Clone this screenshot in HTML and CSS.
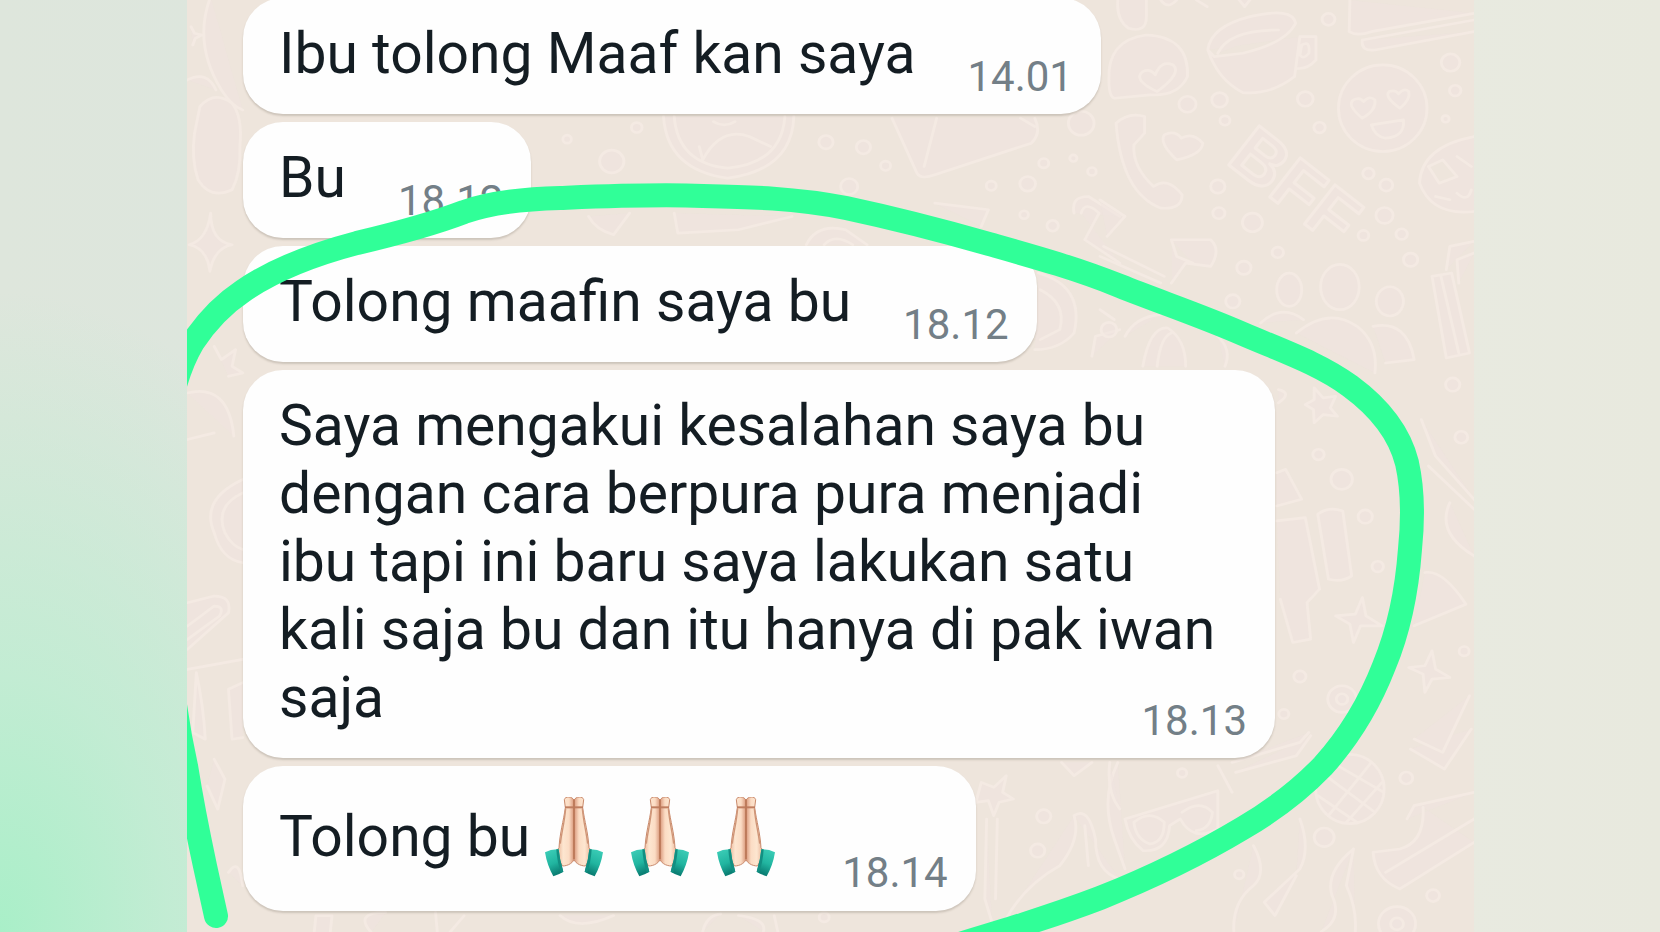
FILE: index.html
```html
<!DOCTYPE html>
<html lang="id">
<head>
<meta charset="UTF-8" />
<meta name="viewport" content="width=device-width, initial-scale=1" />
<title>Chat</title>
<link rel="stylesheet" href="styles.css">
</head>
<body>

<svg class="symbols" aria-hidden="true">
  <defs>
    <linearGradient id="skin" x1="0" y1="0" x2="1" y2="0">
      <stop offset="0" stop-color="#e9b496" />
      <stop offset="0.35" stop-color="#fde6d0" />
      <stop offset="0.7" stop-color="#fbdcc4" />
      <stop offset="1" stop-color="#d9977a" />
    </linearGradient>
    <linearGradient id="cuff" x1="0" y1="0" x2="0.3" y2="1">
      <stop offset="0" stop-color="#3fd0ba" />
      <stop offset="0.6" stop-color="#21b5a0" />
      <stop offset="1" stop-color="#0b7f74" />
    </linearGradient>
    <g id="hand">
      <path d="M89 10 C84 -3 62 -3 60 8 L63 32 C57 75 47 105 44 152 C34 162 40 180 54 207 C72 207 89 196 89 184 Z" fill="url(#skin)" stroke="#c98a6c" stroke-width="3" />
      <path d="M62 31 L88 31" stroke="#c07e60" stroke-width="6" />
      <path d="M64 35 C60 80 52 105 48 140" fill="none" stroke="#cf9577" stroke-width="4" />
      <path d="M2 166 Q20 156 43 157 Q46 190 57 224 Q45 232 27 238 Q8 204 2 166 Z" fill="url(#cuff)" />
      <path d="M43 157 Q46 190 57 224 L50 228 Q38 195 36 157 Z" fill="#128f82" />
    </g>
    <symbol id="pray" viewBox="0 0 178 240">
      <use href="#hand" />
      <use href="#hand" transform="translate(178 0) scale(-1 1)" />
      <path d="M89 8 L89 186" stroke="#bb7858" stroke-width="5" />
    </symbol>
  </defs>
</svg>

<div class="page">
  <main class="chat">

    <!-- wallpaper doodles -->
    <svg class="doodles" viewBox="187 0 1287 932" preserveAspectRatio="xMidYMin slice" aria-hidden="true">
      <!-- left edge -->
      <g transform="scale(0.357 0.333)">
        <path d="M590 -10 Q540 130 620 270 Q650 320 680 330 M535 80 L545 100 L565 105 L547 115 L540 135 M525 240 Q580 210 605 270" />
        <path d="M560 320 Q600 270 650 310 Q680 350 672 440 Q675 520 650 570 Q590 600 555 540 Q535 480 545 400 Z" />
        <path d="M590 640 Q590 725 650 735 Q600 745 588 815 Q580 745 530 735 Q580 720 590 640 Z" />
        <path d="M600 1040 L620 1080 L660 1050 L650 1100 L680 1120 L640 1130 M525 1180 Q640 1150 655 1310 M525 1320 L600 1300" />
        <path d="M680 1440 Q560 1500 600 1600 Q620 1680 680 1690 M680 1480 Q600 1520 630 1600 Q650 1640 680 1650" />
        <path d="M525 1810 L600 1790 Q650 1790 640 1840 L525 1950 M525 1880 L600 1820 Q630 1820 615 1850 L525 1920" />
        <path d="M525 2010 L680 1980 M550 2020 Q570 2120 575 2220 L540 2200 Z M680 2050 L640 2070 L650 2220 L680 2215" />
        <path d="M600 2280 L630 2340 L610 2430 L580 2360 M640 2620 Q670 2570 680 2660 M880 2800 L885 2750 L930 2750 L925 2800 M1040 2800 Q990 2740 1080 2740 M1220 2740 L1225 2800 M1300 2750 L1260 2800" />
      </g>
      <!-- top middle -->
      <g transform="translate(560 0) scale(0.357 0.333)">
        <path d="M290 350 Q300 510 470 535 Q650 510 655 350 M320 350 Q330 490 470 505 Q620 490 630 350 M400 480 Q450 380 530 410 L590 440 M390 440 L400 480 M430 365 Q460 385 490 365" />
        <path d="M930 355 L1000 520 Q1010 540 1050 525 L1320 430 Q1350 400 1330 355 M1055 355 L1020 500 M1290 355 L1330 380" />
        <circle cx="145" cy="485" r="34" /><circle cx="20" cy="418" r="12" /><circle cx="745" cy="427" r="20" />
        <circle cx="850" cy="442" r="20" /><circle cx="912" cy="498" r="14" /><circle cx="1355" cy="490" r="14" />
        <circle cx="1310" cy="552" r="22" /><circle cx="1208" cy="558" r="14" /><circle cx="1300" cy="645" r="12" />
        <circle cx="1380" cy="678" r="16" /><circle cx="1460" cy="370" r="36" /><circle cx="1490" cy="515" r="12" />
        <circle cx="810" cy="560" r="24" /><circle cx="215" cy="383" r="15" /><circle cx="1438" cy="475" r="10" />
        <path d="M320 640 L330 700 L500 690 L650 650 M80 650 Q100 690 150 705 L195 640 M690 735 Q720 670 800 690 L860 735 M740 735 Q770 700 820 735 M1050 610 L1200 630 L1180 680" />
        <path d="M1440 640 Q1430 590 1480 590 L1568 650 M1460 640 Q1470 600 1510 640 L1470 720 L1568 790" />
        <path d="M1340 820 Q1470 860 1440 1000 Q1400 1050 1330 1050 M1345 870 Q1420 910 1400 990 L1345 1020 M1490 1070 L1500 1010 L1568 990" />
      </g>
      <!-- top right -->
      <g transform="translate(1100 0) scale(0.357 0.333)">
        <path d="M50 0 Q45 60 80 85 Q130 100 130 50 L130 0 M170 0 Q190 30 215 0 M270 0 L300 20 M390 0 L405 20 L420 0" />
        <path d="M25 240 Q20 120 130 105 Q250 110 245 230 Q220 290 140 285 L40 295 Q25 290 25 240 Z M160 275 Q90 240 120 215 Q140 205 155 225 Q170 180 205 195 Q230 220 160 275 Z" />
        <path d="M302 150 Q310 80 420 50 Q540 20 548 70 Q520 130 400 160 L320 170 Z M302 150 Q330 240 400 278 Q480 285 545 230 L560 110 M560 110 L605 110 L605 180 Q580 210 550 205 M565 135 Q590 120 585 160 Q570 180 560 165 Z M330 160 Q360 90 500 90" />
        <path d="M700 0 L698 95 Q720 110 760 95 L1048 40 M735 120 Q730 155 770 150 L1048 95 M735 120 L1048 60" />
        <ellipse cx="792" cy="325" rx="124" ry="130" />
        <path d="M735 355 Q690 315 710 300 Q728 290 738 305 Q755 285 770 300 Q775 330 735 355 Z M840 325 Q795 290 810 275 Q828 268 836 282 Q852 262 865 275 Q870 300 840 325 Z M760 375 L850 360 Q855 410 800 415 Q770 410 760 375 Z" />
        <path d="M45 370 Q80 335 125 350 L125 400 L95 435 Q90 500 150 560 Q190 530 230 585 Q230 630 170 625 Q60 580 45 370 Z" />
        <path d="M215 480 Q165 430 180 405 Q210 390 228 415 Q260 395 288 430 Q285 465 215 480 Z" />
        <path d="M1048 410 Q900 440 895 550 Q930 650 1048 635 M920 500 L960 480 L1000 530 L950 550 Z M1000 470 L1040 500 M1000 580 Q1030 610 1040 570 M940 590 L980 600" />
        <circle cx="245" cy="313" r="24" /><circle cx="335" cy="300" r="22" /><circle cx="350" cy="362" r="14" />
        <circle cx="575" cy="297" r="22" /><circle cx="615" cy="383" r="16" /><circle cx="982" cy="188" r="26" />
        <circle cx="995" cy="272" r="16" /><circle cx="640" cy="58" r="18" /><circle cx="752" cy="521" r="16" />
        <circle cx="802" cy="556" r="18" /><circle cx="797" cy="647" r="24" /><circle cx="738" cy="707" r="15" />
        <circle cx="845" cy="703" r="16" /><circle cx="870" cy="780" r="20" /><circle cx="427" cy="668" r="28" />
        <circle cx="333" cy="640" r="17" /><circle cx="330" cy="560" r="20" /><circle cx="498" cy="758" r="16" />
        <circle cx="403" cy="804" r="20" /><circle cx="372" cy="905" r="20" /><circle cx="968" cy="357" r="10" />
        <path d="M0 600 L70 650 L20 710 M10 740 L180 830 M0 770 L170 850 M200 720 L310 720 Q340 750 310 800 L240 790 L200 850 M200 720 L215 770 L260 790" />
        <ellipse cx="530" cy="870" rx="35" ry="50" /><ellipse cx="672" cy="862" rx="54" ry="68" /><ellipse cx="812" cy="905" rx="38" ry="44" />
        <path d="M550 1000 Q640 920 720 980 Q780 1030 770 1120 M450 970 Q510 910 570 960 M765 980 Q860 960 880 1080 L800 1090" />
        <path d="M930 830 L985 820 L1035 1060 L970 1075 Z M955 830 L1005 1060 M970 810 L980 740 L1048 725 M1005 850 L1000 780 L1048 760" />
        <path d="M70 1010 Q100 950 170 945 M120 1100 Q140 980 190 985 Q240 1020 240 1100 M160 1100 Q170 1010 200 1000 M350 1100 Q370 1050 330 1010 M0 930 L40 960" />
        <circle cx="25" cy="990" r="22" /><circle cx="988" cy="1155" r="20" /><circle cx="1012" cy="1313" r="18" /><circle cx="612" cy="1365" r="16" />
        <path d="M600 1165 L625 1195 L660 1190 L645 1225 L665 1250 L625 1245 L600 1270 L598 1230 L575 1215 L600 1200 Z M900 1260 L940 1370 L1048 1500 M500 1170 Q540 1180 500 1210" />
      </g>
      <text class="doodle-word" transform="translate(1225 162) rotate(38)">BFF</text>
      <!-- bottom right -->
      <g transform="translate(1100 466) scale(0.357 0.333)">
        <circle cx="677" cy="40" r="30" /><circle cx="743" cy="152" r="20" /><circle cx="778" cy="302" r="16" />
        <circle cx="560" cy="632" r="17" /><circle cx="678" cy="700" r="40" /><circle cx="678" cy="700" r="16" />
        <circle cx="515" cy="745" r="14" /><circle cx="858" cy="937" r="18" /><circle cx="628" cy="1115" r="28" />
        <circle cx="933" cy="1290" r="18" /><circle cx="832" cy="1375" r="52" /><circle cx="832" cy="1375" r="18" />
        <circle cx="390" cy="1227" r="13" /><circle cx="230" cy="922" r="13" /><circle cx="1020" cy="556" r="14" />
        <path d="M495 20 L520 10 L565 100 L495 120 M495 165 L575 155 L615 370 L580 410 L590 520 L540 530 L505 400 M610 145 Q640 120 680 135 L705 330 Q680 350 640 340 Z" />
        <path d="M735 395 L745 450 L790 480 L730 480 L710 530 L700 475 L660 450 L715 445 Z M930 555 L940 610 L980 635 L930 640 L910 680 L905 625 L865 605 L910 600 Z" />
        <path d="M910 320 Q960 310 1025 415 L880 480 M920 0 L1048 130 M1048 270 Q940 200 980 110 M870 850 L965 910 L1040 790 M880 820 L960 860 L1035 690" />
        <ellipse cx="700" cy="970" rx="96" ry="104" />
        <path d="M620 920 L770 1040 M650 890 L795 980 M610 990 L720 1070 M760 890 L640 1050 M790 950 L690 1070" />
        <path d="M370 890 L560 830 L585 800 M380 920 L550 870 L590 810 M70 1060 L330 975 L330 1090 Q260 1130 225 1060 L195 1080 Q190 1160 120 1155 Q80 1120 70 1060 M95 1070 Q140 1030 180 1070 Q180 1130 140 1135 Q100 1120 95 1070 M230 1040 Q280 1000 315 1040 Q310 1090 270 1095 M50 890 Q0 1000 40 1120 L70 1210 M330 900 L370 980" />
        <path d="M860 1060 L880 1020 L1048 980 M905 1025 Q910 1130 840 1150 L765 1160 Q770 1240 840 1270 L1048 1130 M800 1220 L1048 1060" />
        <path d="M560 1060 Q590 1150 560 1210 L460 1310 L490 1350 L550 1230 M430 1140 Q470 1220 430 1260 Q370 1310 375 1398 M710 1150 Q630 1220 650 1290 Q680 1360 620 1398 M710 1150 L690 1260 Q720 1330 715 1398" />
      </g>
      <!-- bottom middle -->
      <g transform="translate(560 466) scale(0.357 0.333)">
        <path d="M1180 950 L1215 965 L1250 930 L1240 980 L1270 1000 L1230 1010 L1215 1050 L1200 1005 L1165 1010 Z M1195 1060 L1190 1300 L1210 1370 M1225 1060 L1220 1300 M1405 890 L1440 930 L1490 890 M1540 890 Q1530 980 1568 1030" />
        <path d="M1440 1050 Q1480 1020 1500 1120 Q1500 1220 1568 1240 M1440 1050 Q1460 1120 1400 1200 Q1300 1260 1250 1360 M1470 1080 L1480 1200" />
        <circle cx="1355" cy="1052" r="20" /><circle cx="1338" cy="1155" r="20" /><circle cx="740" cy="1355" r="14" />
        <path d="M0 1350 Q50 1398 150 1350 M400 1398 Q410 1350 450 1345 M600 1350 L610 1398 M500 1350 Q580 1360 570 1398" />
      </g>
    </svg>

    <div class="bubble">
      <p class="text">Ibu tolong Maaf kan saya</p>
      <time class="time">14.01</time>
    </div>
    <div class="bubble">
      <p class="text">Bu</p>
      <time class="time">18.12</time>
    </div>
    <div class="bubble">
      <p class="text">Tolong maafin saya bu</p>
      <time class="time">18.12</time>
    </div>
    <div class="bubble long">
      <p class="text">Saya mengakui kesalahan saya bu dengan cara berpura pura menjadi ibu tapi ini baru saya lakukan satu kali saja bu dan itu hanya di pak iwan saja</p>
      <time class="time">18.13</time>
    </div>
    <div class="bubble emoji-bubble">
      <p class="text">Tolong bu</p>
      <div class="emojis" role="img" aria-label="🙏🏻🙏🏻🙏🏻">
        <svg class="emoji"><use href="#pray" /></svg>
        <svg class="emoji"><use href="#pray" /></svg>
        <svg class="emoji"><use href="#pray" /></svg>
      </div>
      <time class="time">18.14</time>
    </div>

    <!-- hand drawn marker -->
    <svg class="marker" viewBox="187 0 1287 932" preserveAspectRatio="xMidYMin slice" aria-hidden="true">
      <path d="M172 396 C178 372 184 357 193 342 C207 321 222 305 243 291 C275 269 315 254 357 243 C395 234 430 225 464 212 C490 203 520 199 560 198 C610 196 655 194 703 196 C750 197 795 198 846 208 C893 218 940 230 989 244 C1035 257 1075 268 1120 286 C1160 302 1202 316 1243 334 C1285 352 1320 364 1350 386 C1380 408 1400 435 1407 463 C1413 490 1413 520 1410 549 C1407 590 1399 630 1384 666 C1370 702 1350 736 1323 766 C1300 790 1272 811 1243 828 C1198 855 1150 878 1100 898 C1050 917 1000 932 940 950" />
      <path d="M173 690 Q178 730 186 766 Q193 810 205 866 L216 916" />
    </svg>
  </main>
</div>

</body>
</html>
```
FILE: styles.css
```css
* {
  box-sizing: border-box;
}
body {
  margin: 0;
  font-family: Roboto, sans-serif;
  color: #141d23;
  overflow: hidden;
}
.symbols {
  position: absolute;
  width: 0;
  height: 0;
}
.page {
  display: grid;
  grid-template-columns: minmax(0, 1fr);
  min-height: 100vh;
  padding: 0 186px 0 187px;
  background:
    radial-gradient(ellipse 420px 640px at 0 100%, #a9efc8 0%, rgba(185, 238, 208, 0.75) 40%, rgba(214, 232, 220, 0) 100%),
    linear-gradient(90deg, rgba(222, 230, 220, 1) 0%, rgba(221, 230, 221, 1) 12%, rgba(232, 234, 224, 1) 88%, rgba(232, 233, 222, 1) 100%);
}
.chat {
  position: relative;
  display: flex;
  flex-direction: column;
  align-items: flex-start;
  gap: 8px;
  height: 100vh;
  padding: 0 56px;
  background: #eee5dc;
  overflow: hidden;
}
.doodles,
.marker {
  position: absolute;
  top: 0;
  left: 0;
  width: 100%;
  height: 100%;
}
.doodles {
  fill: #efe4df;
  fill-opacity: 0.5;
  stroke: #f4eae3;
  stroke-width: 8;
  stroke-linejoin: round;
  stroke-linecap: round;
}
.doodle-word {
  font: bold 72px "Liberation Sans", sans-serif;
  stroke-width: 3;
}
.marker {
  fill: none;
  stroke: #30ff98;
  stroke-width: 24;
  stroke-linecap: round;
  stroke-linejoin: round;
  pointer-events: none;
}
.bubble {
  position: relative;
  flex: none;
  display: flex;
  align-items: flex-end;
  max-width: 1032px;
  padding: 22px 28px 26px 36px;
  background: #fefefe;
  border-radius: 40px;
  box-shadow: 0 2px 2px rgba(90, 80, 70, 0.22);
}
.bubble:first-of-type {
  margin-top: -2px;
}
.text {
  margin: 0;
  font-size: 57px;
  line-height: 68px;
}
.time {
  margin: 0 0 -13px 52px;
  font-size: 42px;
  line-height: 48px;
  color: #737f87;
}
/* time sits in the corner of the last line */
.long {
  display: grid;
}
.long .text,
.long .time {
  grid-area: 1 / 1;
}
.long .text {
  padding-right: 22px;
}
.long .time {
  place-self: end;
}
.emoji-bubble {
  padding: 31px 28px 34px 36px;
}
.emoji-bubble .text {
  padding-bottom: 6px;
}
.emoji-bubble .time {
  margin-bottom: -20px;
  margin-left: 66px;
}
.emojis {
  display: flex;
  gap: 26px;
  margin-left: 14px;
}
.emoji {
  display: block;
  width: 60px;
  height: 80px;
}
```
